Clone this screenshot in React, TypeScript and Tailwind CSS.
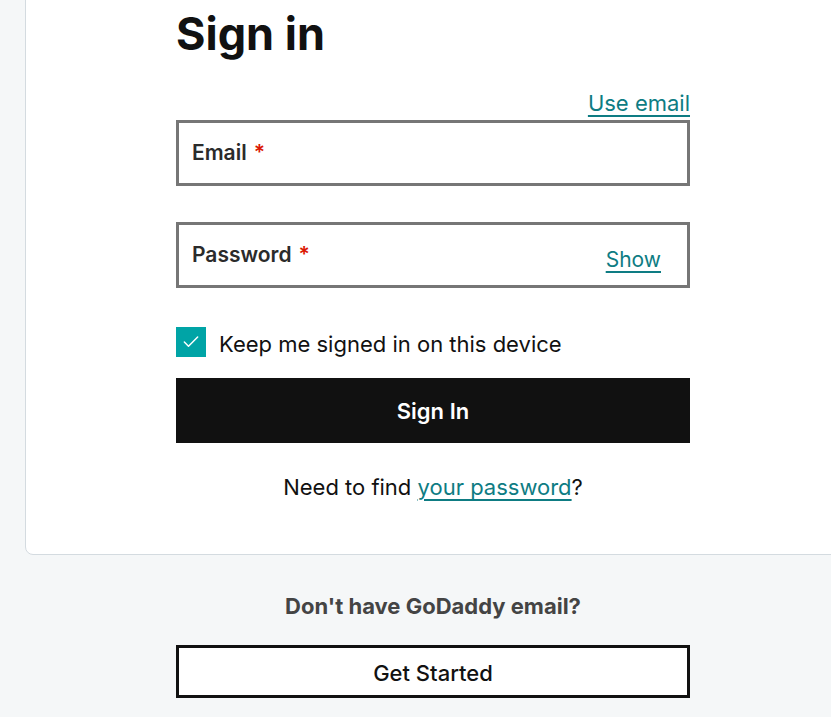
import { Check } from "lucide-react";

const font = { fontFamily: "Inter, 'Noto Sans', sans-serif" };

// One bordered field with a floating label
function Field({ label, action }: { label: string; action?: string }) {
  return (
    <div className="flex h-[66px] items-center justify-between border-[3px] border-[#767676] bg-white pl-[13px] pr-[26px]">
      <span className="text-[21px] font-semibold text-[#2b2b2b]">
        {label}
        <span className="ml-[7px] text-[#db1802]">*</span>
      </span>
      {action && (
        <a href="#" className="mt-[10px] text-[21px] text-[#0e7c83] underline decoration-2 underline-offset-[4px]">
          {action}
        </a>
      )}
    </div>
  );
}

export default function App() {
  return (
    <div className="h-[717px] w-[831px] overflow-hidden bg-[#f5f7f8]" style={font}>
      <div className="w-[866px]">
        <div className="mx-[25px] -mt-[20px] rounded-[8px] border border-[#d4dbe0] bg-white pb-[52px] pt-[23px]">
          <div className="mx-auto flex w-[514px] flex-col">
            <h1 className="text-[45px] leading-[60px] font-bold text-[#111]">Sign in</h1>
            <div className="mt-[22px] flex justify-end">
              <a href="#" className="text-[22px] leading-[34px] text-[#0e7c83] underline decoration-2 underline-offset-[4px]">
                Use email
              </a>
            </div>
            <Field label="Email" />
            <div className="mt-[36px]">
              <Field label="Password" action="Show" />
            </div>
            <label className="mt-[39px] flex h-[30px] items-center gap-[13px]">
              <span className="flex h-[30px] w-[30px] items-center justify-center bg-[#00a4a6]">
                <Check size={20} strokeWidth={1.75} color="white" />
              </span>
              <span className="pt-[3px] text-[22px] leading-[30px] text-[#111]">Keep me signed in on this device</span>
            </label>
            <button className="mt-[21px] h-[65px] w-full bg-[#111] pt-[2px] text-[22px] font-semibold text-white">
              Sign In
            </button>
            <p className="mt-[29px] text-center text-[22px] leading-[30px] text-[#111]">
              Need to find{" "}
              <a href="#" className="text-[#0e7c83] underline decoration-2 underline-offset-[4px]">
                your password
              </a>
              ?
            </p>
          </div>
        </div>
        <div className="mx-auto flex w-[514px] flex-col items-center">
          <p className="mt-[37px] text-[22px] font-bold leading-[28px] text-[#444]">Don't have GoDaddy email?</p>
          <button className="mt-[25px] h-[53px] w-full border-[3px] border-[#111] bg-white pt-[3px] text-[22px] font-medium leading-[28px] text-[#111]">
            Get Started
          </button>
        </div>
      </div>
    </div>
  );
}
